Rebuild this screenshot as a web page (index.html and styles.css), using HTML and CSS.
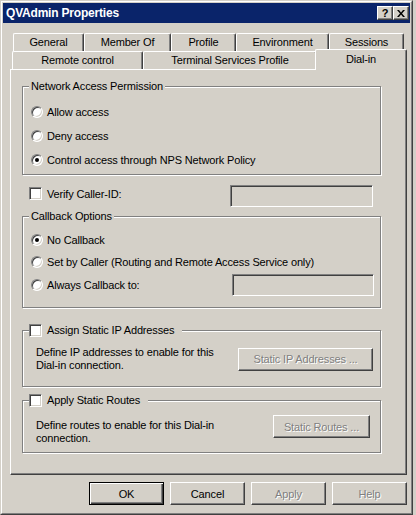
FILE: index.html
```html
<!DOCTYPE html>
<html>
<head>
<meta charset="utf-8">
<title>QVAdmin Properties</title>
<link rel="stylesheet" href="styles.css">
</head>
<body>
<div class="window">
  <div class="frame">
    <div class="titlebar">
      <span class="title">QVAdmin Properties</span>
      <div class="caption-btns">
        <span class="cbtn help">?</span>
        <span class="cbtn close"><svg width="8" height="7" viewBox="0 0 8 7"><path d="M0 0h2l2 2.4 2-2.4h2l-3 3.5 3 3.5h-2l-2-2.4-2 2.4h-2l3-3.5z" fill="#000"/></svg></span>
      </div>
    </div>

    <div class="tabs">
      <div class="tabrow row1">
        <div class="tab t-general">General</div>
        <div class="tab t-member">Member Of</div>
        <div class="tab t-profile">Profile</div>
        <div class="tab t-env">Environment</div>
        <div class="tab t-sessions">Sessions</div>
      </div>
      <div class="tabrow row2">
        <div class="tab t-remote">Remote control</div>
        <div class="tab t-terminal">Terminal Services Profile</div>
        <div class="tab t-dialin selected">Dial-in</div>
      </div>
    </div>

    <div class="panel">
      <fieldset class="group g-nap">
        <legend>Network Access Permission</legend>
        <div class="group-body nap-body">
          <div class="opt"><span class="radio"></span><span>Allow access</span></div>
          <div class="opt"><span class="radio"></span><span>Deny access</span></div>
          <div class="opt"><span class="radio checked"></span><span>Control access through NPS Network Policy</span></div>
        </div>
      </fieldset>

      <div class="verify-row">
        <div class="opt opt-check"><span class="check"></span><span>Verify Caller-ID:</span></div>
        <span class="textbox tb-verify"></span>
      </div>

      <fieldset class="group g-callback">
        <legend>Callback Options</legend>
        <div class="group-body cb-body">
          <div class="opt cb-1"><span class="radio checked"></span><span>No Callback</span></div>
          <div class="opt cb-2"><span class="radio"></span><span>Set by Caller (Routing and Remote Access Service only)</span></div>
          <div class="always-row">
            <div class="opt"><span class="radio"></span><span>Always Callback to:</span></div>
            <span class="textbox tb-always"></span>
          </div>
        </div>
      </fieldset>

      <fieldset class="group g-ip">
        <legend class="check-legend"><span class="legend-inner"><span class="check"></span><span>Assign Static IP Addresses</span></span></legend>
        <div class="group-body ip-body">
          <p class="desc">Define IP addresses to enable for this<br>Dial-in connection.</p>
          <button class="btn disabled btn-ip">Static IP Addresses ...</button>
        </div>
      </fieldset>

      <fieldset class="group g-routes">
        <legend class="check-legend"><span class="legend-inner"><span class="check"></span><span>Apply Static Routes</span></span></legend>
        <div class="group-body routes-body">
          <p class="desc desc-routes">Define routes to enable for this Dial-in<br>connection.</p>
          <button class="btn disabled btn-routes">Static Routes ...</button>
        </div>
      </fieldset>
    </div>

    <div class="actions">
      <button class="btn default">OK</button>
      <button class="btn">Cancel</button>
      <button class="btn disabled">Apply</button>
      <button class="btn disabled">Help</button>
    </div>
  </div>
</div>
</body>
</html>
```

FILE: styles.css
```css
html, body {
  margin: 0;
  padding: 0;
}
body {
  background: #d4d0c8;
  font-family: "Liberation Sans", Arial, sans-serif;
  font-size: 11px;
  letter-spacing: -0.15px;
  color: #000;
}

.window {
  width: 413px;
  height: 515px;
  box-sizing: border-box;
  border: 1px solid;
  border-color: #d4d0c8 #404040 #404040 #d4d0c8;
}
.frame {
  height: 100%;
  box-sizing: border-box;
  border: 1px solid;
  border-color: #fff #808080 #808080 #fff;
  padding: 1px;
  display: flex;
  flex-direction: column;
}

/* title bar */
.titlebar {
  height: 20px;
  flex: none;
  background: #0a246a;
  display: flex;
  align-items: center;
  justify-content: space-between;
  padding: 0 1px 0 3px;
}
.title {
  color: #fff;
  font-weight: bold;
  font-size: 12px;
  letter-spacing: -0.2px;
}
.caption-btns {
  display: flex;
}
.cbtn {
  width: 16px;
  height: 14px;
  box-sizing: border-box;
  background: #d4d0c8;
  border: 1px solid;
  border-color: #fff #404040 #404040 #fff;
  box-shadow: inset -1px -1px 0 #808080;
  display: flex;
  align-items: center;
  justify-content: center;
  font-weight: bold;
  font-size: 11px;
  line-height: 1;
}

/* tabs */
.tabs {
  margin-top: 10px;
  flex: none;
}
.tabrow {
  display: flex;
  height: 18px;
}
.row1 { padding-left: 10px; }
.row2 { padding-left: 9px; }
.tab {
  box-sizing: border-box;
  height: 18px;
  background: #d4d0c8;
  border-top: 1px solid #fff;
  border-left: 1px solid #fff;
  border-right: 1px solid #404040;
  box-shadow: inset -1px 0 0 #808080;
  border-radius: 2px 2px 0 0;
  display: flex;
  align-items: center;
  justify-content: center;
  padding-bottom: 1px;
}
.t-general { width: 71px; }
.t-member { width: 87px; }
.t-profile { width: 65px; }
.t-env { width: 93px; }
.t-sessions { width: 75px; }
.t-remote { width: 131px; }
.t-terminal { width: 174px; }
.t-dialin { width: 88px; }
.tab.selected {
  position: relative;
  z-index: 1;
  width: 92px;
  height: 21px;
  margin: -2px -2px 0 -2px;
  padding-bottom: 3px;
}

/* panel */
.panel {
  flex: none;
  margin-left: 7px;
  width: 397px;
  height: 406px;
  box-sizing: border-box;
  border: 1px solid;
  border-color: #fff #404040 #404040 #fff;
  box-shadow: inset -1px -1px 0 #808080;
  padding: 10px 0 0 11px;
}

.group {
  margin: 0;
  padding: 0;
  width: 359px;
  min-width: 0;
  box-sizing: border-box;
  border: 1px solid #808080;
  box-shadow: 1px 1px 0 #fff, inset 1px 1px 0 #fff;
}
.group legend {
  padding: 0 2px;
  margin-left: 6px;
  line-height: 13px;
  height: 13px;
  background: #d4d0c8;
}
.group legend.check-legend {
  padding: 0 8px 0 0;
}
.legend-inner {
  display: flex;
  align-items: center;
  gap: 5px;
}

.opt {
  display: flex;
  align-items: center;
  gap: 4px;
  height: 24px;
}
.opt-check { gap: 5px; height: auto; }

.radio {
  position: relative;
  flex: none;
  width: 12px;
  height: 12px;
  box-sizing: border-box;
  border-radius: 50%;
  background: #fff;
  border: 1px solid;
  border-color: #808080 #fff #fff #808080;
  box-shadow: inset 1px 1px 0 #404040, inset -1px -1px 0 #d4d0c8;
}
.radio.checked::after {
  content: "";
  position: absolute;
  left: 3px;
  top: 3px;
  width: 4px;
  height: 4px;
  border-radius: 50%;
  background: #000;
}

.check {
  flex: none;
  width: 13px;
  height: 13px;
  box-sizing: border-box;
  background: #fff;
  border: 1px solid;
  border-color: #808080 #fff #fff #808080;
  box-shadow: inset 1px 1px 0 #404040, inset -1px -1px 0 #d4d0c8;
}

.textbox {
  display: block;
  height: 22px;
  box-sizing: border-box;
  background: #d4d0c8;
  border: 1px solid;
  border-color: #808080 #fff #fff #808080;
  box-shadow: inset 1px 1px 0 #404040, inset -1px -1px 0 #d4d0c8;
}

/* group 1 */
.nap-body { padding: 7px 0 2px 8px; }

/* verify row */
.verify-row {
  margin-top: 10px;
  display: grid;
  grid-template-columns: 201px 143px;
  align-items: start;
  padding-left: 7px;
  height: 22px;
}
.verify-row .opt-check { margin-top: 2px; }

/* group 2 */
.g-callback { margin-top: 3px; }
.cb-body { padding: 6px 0 11px 8px; }
.cb-1 { height: 22px; }
.cb-2 { height: 21px; }
.always-row {
  margin-top: 2px;
  display: grid;
  grid-template-columns: 201px 142px;
  align-items: center;
  height: 22px;
}
.always-row .opt { height: 22px; }

/* group 3 & 4 */
.g-ip { margin-top: 16px; }
.g-routes { margin-top: 7px; }
.ip-body {
  display: flex;
  align-items: center;
  justify-content: space-between;
  padding: 9px 7px 14px 13px;
}
.routes-body {
  display: flex;
  align-items: flex-start;
  justify-content: space-between;
  padding: 8px 10px 7px 13px;
}
.desc {
  margin: 0;
  line-height: 13px;
}
.desc-routes { margin-top: 4px; }

/* buttons */
.btn {
  width: 75px;
  height: 23px;
  box-sizing: border-box;
  padding: 0;
  margin: 0;
  background: #d4d0c8;
  border: 1px solid;
  border-color: #fff #404040 #404040 #fff;
  box-shadow: inset -1px -1px 0 #808080;
  font-family: "Liberation Sans", Arial, sans-serif;
  font-size: 11px;
  letter-spacing: -0.15px;
  color: #000;
}
.btn.default {
  border-color: #000;
  box-shadow: inset 1px 1px 0 #fff, inset -1px -1px 0 #404040, inset -2px -2px 0 #808080;
}
.btn.disabled {
  color: #808080;
  text-shadow: 1px 1px 0 #fff;
}
.btn-ip { width: 135px; }
.btn-routes { width: 97px; }

.actions {
  flex: none;
  margin-top: 7px;
  display: flex;
  justify-content: flex-end;
  gap: 6px;
  padding-right: 3px;
}
```
